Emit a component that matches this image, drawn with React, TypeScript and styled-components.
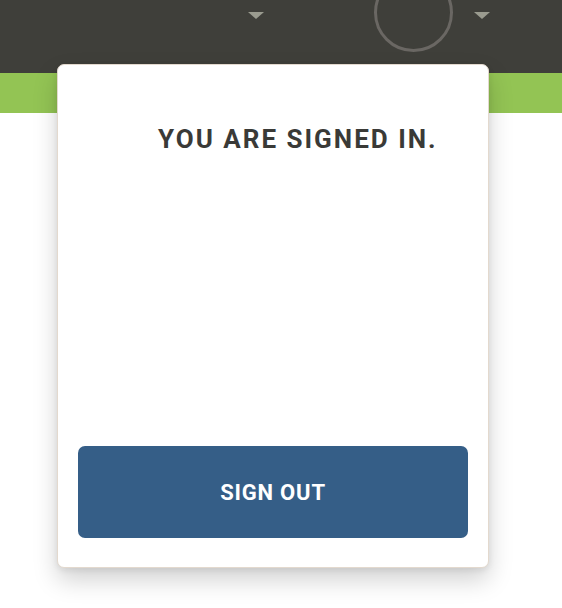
import React from "react";
import styled, { createGlobalStyle } from "styled-components";

const GlobalStyle = createGlobalStyle`
  html, body {
    margin: 0;
    padding: 0;
    background: #ffffff;
    font-family: Roboto, "Liberation Sans", Arial, sans-serif;
  }
`;

const Page = styled.div`
  position: relative;
  width: 562px;
  height: 608px;
  overflow: hidden;
  background: #ffffff;
`;

const TopBar = styled.header`
  display: flex;
  align-items: flex-start;
  height: 73px;
  overflow: hidden;
  background: #3f3f3a;
`;

const Caret = styled.span<{ $gap: number }>`
  width: 0;
  height: 0;
  margin-left: ${(p) => p.$gap}px;
  margin-top: 12px;
  border-left: 8px solid transparent;
  border-right: 8px solid transparent;
  border-top: 7px solid #9a9b8f;
`;

const Avatar = styled.span`
  box-sizing: border-box;
  width: 79px;
  height: 79px;
  margin-left: 110px;
  margin-top: -27px;
  border: 3px solid #6a6763;
  border-radius: 50%;
`;

const GreenBand = styled.div`
  height: 40px;
  background: #93c454;
`;

const Dropdown = styled.div`
  position: absolute;
  left: 57px;
  top: 64px;
  box-sizing: border-box;
  width: 432px;
  height: 504px;
  display: flex;
  flex-direction: column;
  padding: 0 20px 29px 20px;
  background: #ffffff;
  border: 1.5px solid #e3d9ce;
  border-radius: 7px;
  box-shadow: 0 12px 24px rgba(0, 0, 0, 0.18), 0 2px 6px rgba(0, 0, 0, 0.08);
`;

const Title = styled.h2`
  margin: 59px 0 0 80px;
  font-size: 26px;
  line-height: 30px;
  font-weight: 700;
  letter-spacing: 2px;
  color: #3a3a37;
  white-space: nowrap;
`;

const Spacer = styled.div`
  flex: 1;
`;

const SignOutButton = styled.button`
  height: 92px;
  width: 100%;
  padding: 0;
  border: 0;
  border-radius: 7px;
  background: #355e87;
  color: #ffffff;
  font-family: Roboto, "Liberation Sans", Arial, sans-serif;
  font-size: 22px;
  font-weight: 700;
  letter-spacing: 0.8px;
  cursor: pointer;
`;

export default function App() {
  return (
    <>
      <GlobalStyle />
      <Page>
        <TopBar>
          <Caret $gap={248} />
          <Avatar />
          <Caret $gap={21} />
        </TopBar>
        <GreenBand />
        <Dropdown>
          <Title>YOU ARE SIGNED IN.</Title>
          <Spacer />
          <SignOutButton>SIGN OUT</SignOutButton>
        </Dropdown>
      </Page>
    </>
  );
}
